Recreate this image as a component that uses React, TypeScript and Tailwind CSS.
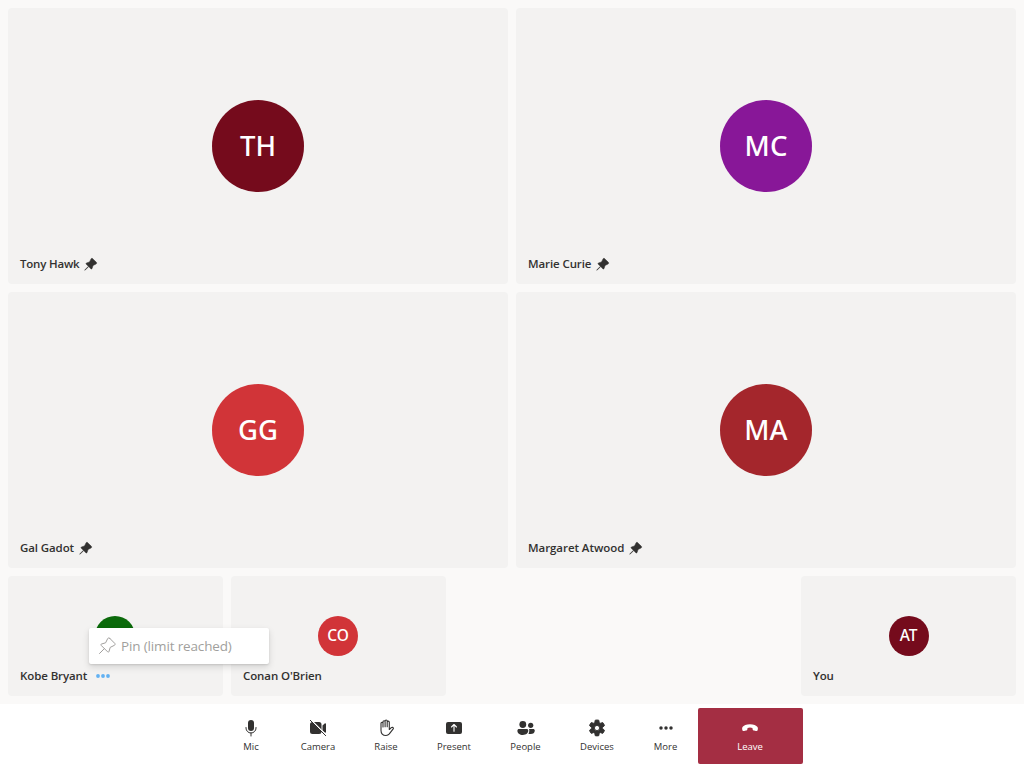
import type { ReactNode } from "react";

const PIN =
  "M12.9 2.2 17.8 7.1C18.5 7.8 18.3 8.9 17.4 9.3L13.4 11.3 12.1 15.2C11.9 16 11 16.2 10.4 15.6L7.6 12.8 3.4 17 2.3 17.7 3 16.6 7.2 12.4 4.4 9.6C3.8 9 4 8.1 4.8 7.9L8.7 6.6 10.7 2.6C11.1 1.7 12.2 1.5 12.9 2.2Z";

function PinFilled() {
  return (
    <svg viewBox="0 0 20 20" className="size-[15px] shrink-0" fill="currentColor" stroke="currentColor" strokeWidth="0.7" strokeLinejoin="round">
      <path d={PIN} />
    </svg>
  );
}

function PinOutline() {
  return (
    <svg viewBox="0 0 20 20" className="size-5 shrink-0" fill="none" stroke="currentColor" strokeWidth="1" strokeLinejoin="round" strokeLinecap="round">
      <path d="M12.7 2.3 17.7 7.3C18.4 8 18.2 8.9 17.4 9.3L13.2 11.4 12 15.5C11.8 16.2 11.1 16.3 10.6 15.8L4.2 9.4C3.7 8.9 3.8 8.2 4.5 8L8.6 6.8 10.7 2.6C11.1 1.8 12 1.6 12.7 2.3ZM7.3 12.7 2.5 17.5" />
    </svg>
  );
}

function Dots() {
  return (
    <svg viewBox="0 0 20 20" className="size-5 shrink-0" fill="currentColor">
      <circle cx="5" cy="10" r="1.9" />
      <circle cx="10" cy="10" r="1.9" />
      <circle cx="15" cy="10" r="1.9" />
    </svg>
  );
}

function ToolIcon({ children }: { children: ReactNode }) {
  return (
    <svg viewBox="0 0 20 20" className="size-5" fill="currentColor">
      {children}
    </svg>
  );
}

function Avatar({ initials, color, small }: { initials?: string; color: string; small?: boolean }) {
  return (
    <div
      className={`flex items-center justify-center rounded-full font-['Noto_Sans',sans-serif] font-medium text-white ${color} ${
        small ? "size-10 pb-px text-[15.5px] tracking-[-0.2px]" : "size-[92px] pb-px text-[27.5px] tracking-[0.1px]"
      }`}
    >
      {initials}
    </div>
  );
}

type TileProps = { name: string; initials?: string; color: string; small?: boolean; pinned?: boolean; children?: ReactNode; className?: string; nameClass: string };

function Tile({ name, initials, color, small, pinned, children, className = "", nameClass }: TileProps) {
  return (
    <div className={`relative flex items-center justify-center rounded bg-[#f3f2f1] ${className}`}>
      <Avatar initials={initials} color={color} small={small} />
      <div className="absolute bottom-3 left-3 flex h-4 items-center text-[11.5px] leading-4 font-semibold whitespace-nowrap text-[#323130]">
        <span className={nameClass}>{name}</span>
        {pinned && <span className="ml-1 pt-px"><PinFilled /></span>}
        {children}
      </div>
    </div>
  );
}

function ToolButton({ label, width, icon, leave }: { label: string; width: string; icon: ReactNode; leave?: boolean }) {
  return (
    <button
      className={`flex h-14 flex-col items-center pt-2.5 ${width} ${
        leave ? "rounded-[2px] bg-[#a42e43] pr-px text-white" : "text-[#323130]"
      }`}
    >
      <ToolIcon>{icon}</ToolIcon>
      <span className="mt-0.5 text-[9.5px] leading-[14px]">{label}</span>
    </button>
  );
}

export default function App() {
  return (
    <div className="flex h-screen w-screen flex-col overflow-hidden bg-[#faf9f8] font-['Open_Sans','Noto_Sans',sans-serif]">
      <main className="flex flex-1 flex-col gap-2 p-2">
        <section className="grid h-[560px] grid-cols-2 grid-rows-2 gap-2">
          <Tile name="Tony Hawk" initials="TH" color="bg-[#750b1c]" pinned nameClass="w-[59px] tracking-[-0.2px]" />
          <Tile name="Marie Curie" initials="MC" color="bg-[#881798]" pinned nameClass="w-[63px] tracking-[-0.1px]" />
          <Tile name="Gal Gadot" initials="GG" color="bg-[#d13438]" pinned nameClass="w-[54px] tracking-[-0.1px]" />
          <Tile name="Margaret Atwood" initials="MA" color="bg-[#a4262c]" pinned nameClass="w-[96px] tracking-[-0.06px]" />
        </section>
        <section className="flex h-[120px] gap-2">
          <Tile name="Kobe Bryant" color="bg-[#0b6a0b]" small className="w-[215px] pr-px" nameClass="w-[67px] tracking-[-0.1px]">
            <span className="relative ml-1.5 text-[#62b1f2]">
              <Dots />
              <div className="absolute bottom-[22px] left-[-4px] z-10 flex h-9 w-[180px] items-center gap-1 rounded-[2px] bg-white pl-2 text-[13.5px] font-normal text-[#a19f9d] shadow-[0_3px_7px_rgba(0,0,0,0.13),0_1px_2px_rgba(0,0,0,0.11)]">
                <PinOutline />
                <span className="tracking-[-0.15px]">Pin (limit reached)</span>
              </div>
            </span>
          </Tile>
          <Tile name="Conan O'Brien" initials="CO" color="bg-[#d13438]" small className="w-[215px] pr-px" nameClass="tracking-[-0.1px]" />
          <Tile name="You" initials="AT" color="bg-[#750b1c]" small className="ml-auto w-[215px]" nameClass="tracking-[-0.1px]" />
        </section>
      </main>
      <footer className="flex h-16 items-center justify-center bg-white pr-px">
        <ToolButton label="Mic" width="w-[62px]" icon={<><rect x="7" y="2" width="6" height="11" rx="3" /><path d="M5 9.5v.5a5 5 0 0 0 10 0v-.5M10 15v3" fill="none" stroke="currentColor" strokeLinecap="round" /></>} />
        <ToolButton label="Camera" width="w-[72px]" icon={<><path d="M4.5 4H11a2.5 2.5 0 0 1 2.5 2.5v7A2.5 2.5 0 0 1 11 16H4.5A2.5 2.5 0 0 1 2 13.5v-7A2.5 2.5 0 0 1 4.5 4ZM14.5 7.5l2.2-2c.5-.4 1.3-.1 1.3.6v7.8c0 .7-.8 1-1.3.6l-2.2-2Z" /><path d="m3.2 2.2 15 15" fill="none" stroke="white" strokeWidth="1.5" /><path d="m2.3 2.3 15.4 15.4" fill="none" stroke="currentColor" strokeLinecap="round" /></>} />
        <ToolButton label="Raise" width="w-[64px]" icon={<path transform="translate(.5 0)" d="M4.5 10V5.2a1 1 0 0 1 2 0V9 3.8a1 1 0 0 1 2.1 0V8.8 3a1 1 0 0 1 2.1 0v5.8-4.6a1 1 0 0 1 2.1 0v7.3l2-1.8c.7-.6 1.7-.4 2.1.3.2.3 0 .5-.2.8l-3.9 5.1c-.9 1.1-1.7 1.6-3.3 1.6-3.4 0-5-2.2-5-5Z" fill="none" stroke="currentColor" strokeWidth="1.1" strokeLinecap="round" strokeLinejoin="round" />} />
        <ToolButton label="Present" width="w-[72px]" icon={<><rect x="2" y="4" width="16" height="12" rx="2" /><path d="M10 13.2V7M7.5 9 10 6.5 12.5 9" fill="none" stroke="white" strokeWidth="1.1" strokeLinecap="round" strokeLinejoin="round" /></>} />
        <ToolButton label="People" width="w-[71px]" icon={<><circle cx="6.8" cy="6.5" r="3.4" /><circle cx="14.7" cy="7.3" r="2.6" /><path d="M3.1 11h7.5c1 0 1.7.7 1.7 1.6 0 2.8-2.2 4.3-5.4 4.3S1.4 15.4 1.4 12.7c0-1 .7-1.7 1.7-1.7ZM12.9 11h4.2c1 0 1.7.7 1.7 1.6 0 2.4-1.7 3.5-4.1 3.5-.9 0-1.6-.1-2.3-.4.6-.8.9-1.8.9-3.1 0-.6-.1-1.2-.4-1.6Z" /></>} />
        <ToolButton label="Devices" width="w-[72px]" icon={<path fillRule="evenodd" d="M8.2 2.2a8 8 0 0 1 3.6 0l.4 2.1c.1.7.8 1.1 1.5.9l2-.7a8 8 0 0 1 1.8 3.1l-1.6 1.4c-.6.5-.6 1.4 0 1.9l1.6 1.4a8 8 0 0 1-1.8 3.1l-2-.7c-.7-.2-1.4.2-1.5.9l-.4 2.1a8 8 0 0 1-3.6 0l-.4-2.1c-.1-.7-.8-1.1-1.5-.9l-2 .7a8 8 0 0 1-1.8-3.1l1.6-1.4c.6-.5.6-1.4 0-1.9L2.5 7.6a8 8 0 0 1 1.8-3.1l2 .7c.7.2 1.4-.2 1.5-.9ZM10 7.4a2.6 2.6 0 1 0 0 5.2 2.6 2.6 0 0 0 0-5.2Z" stroke="currentColor" strokeWidth="0.9" strokeLinejoin="round" />} />
        <ToolButton label="More" width="w-[65px]" icon={<><circle cx="5" cy="10" r="1.75" /><circle cx="10" cy="10" r="1.75" /><circle cx="15" cy="10" r="1.75" /></>} />
        <ToolButton label="Leave" width="w-[105px]" leave icon={<path d="M10 6.2c3.6 0 6.4 1.1 7.5 2.9.5.8.5 1.8.2 2.8-.2.8-1 1.2-1.8 1L14 12.6c-.7-.1-1.2-.6-1.3-1.2l-.3-1.5a7.7 7.7 0 0 0-4.8 0l-.3 1.5c-.1.6-.6 1.1-1.3 1.2l-1.9.3c-.8.2-1.6-.2-1.8-1-.3-1-.3-2 .2-2.8 1.1-1.8 3.9-2.9 7.5-2.9Z" />} />
      </footer>
    </div>
  );
}
